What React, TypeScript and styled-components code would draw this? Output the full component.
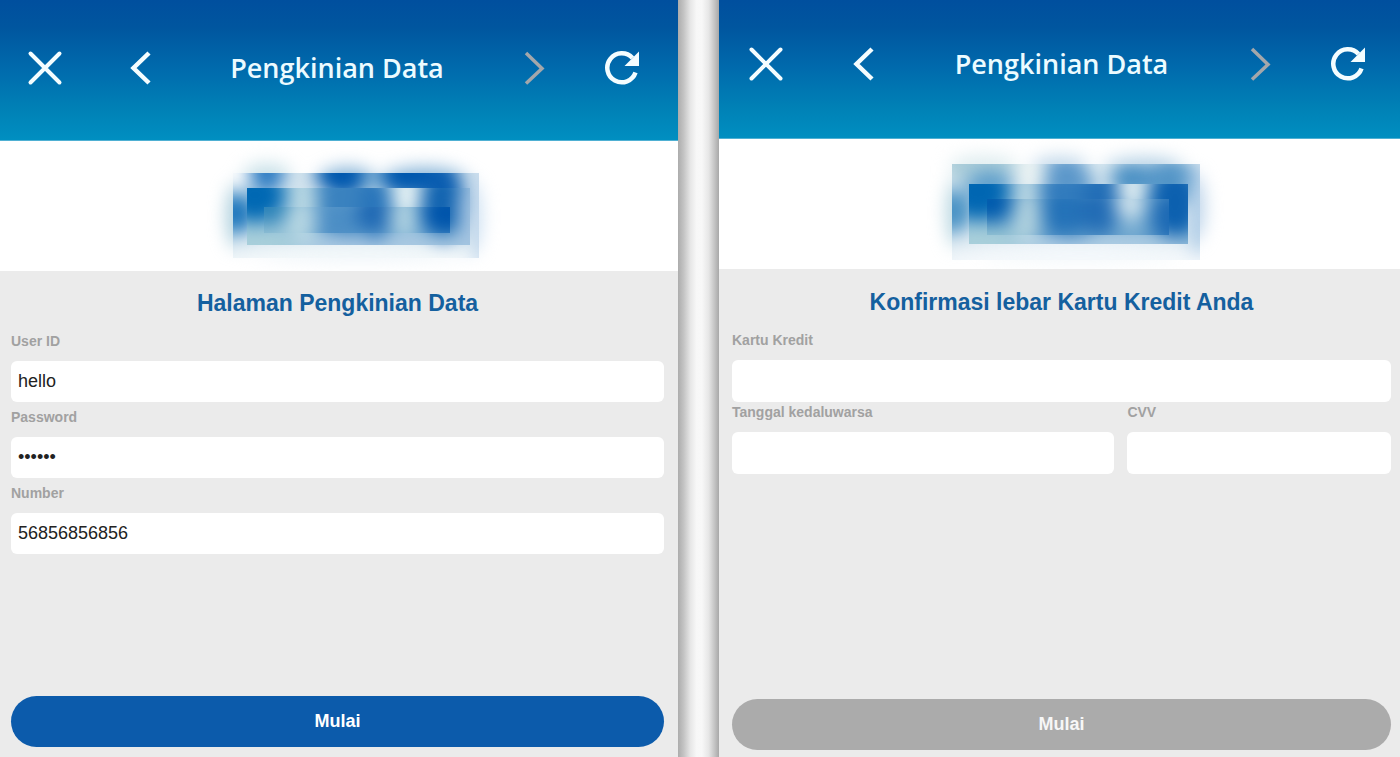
import React, { useId } from "react";
import styled, { createGlobalStyle } from "styled-components";

const GlobalStyle = createGlobalStyle`
  *, *::before, *::after { box-sizing: border-box; }
  body { margin: 0; background: #ebebeb; font-family: "Liberation Sans", Arial, sans-serif; }
`;

const Page = styled.div`
  display: grid;
  grid-template-columns: minmax(0, 678fr) 41px minmax(0, 681fr);
  min-height: 100vh;
`;

const Gutter = styled.div`
  background: linear-gradient(
    90deg,
    #acacac 0%,
    #c4c4c4 14%,
    #e6e6e6 30%,
    #f7f7f7 45%,
    #f8f8f8 58%,
    #e6e6e6 75%,
    #c4c4c4 89%,
    #a8a8a8 100%
  );
`;

const Panel = styled.section`
  display: flex;
  flex-direction: column;
  background: #ebebeb;
`;

const Header = styled.header<{ $compact?: boolean }>`
  display: flex;
  align-items: center;
  height: ${(p) => (p.$compact ? 139 : 141)}px;
  padding: ${(p) => (p.$compact ? "0 34px 10px 29px" : "0 38px 4px 27px")};
  border-bottom: 1px solid #4fb0d3;
  background: linear-gradient(180deg, #004f9e 0%, #00569f 20%, #006bad 50%, #0081b6 78%, #008fc1 100%);
`;

const NavGroup = styled.div<{ $gap: number }>`
  display: flex;
  gap: ${(p) => p.$gap}px;
`;

const IconButton = styled.button`
  width: 36px;
  height: 36px;
  padding: 0;
  border: 0;
  background: none;
  color: #f4fdff;

  &:disabled { color: #a3a7ab; }

  svg { display: block; }
`;

const NavTitle = styled.div`
  flex: 1;
  color: #ecfbff;
  font: 600 27px/36px "Open Sans", sans-serif;
  text-align: center;
  white-space: nowrap;
`;

const Brand = styled.div`
  display: flex;
  justify-content: center;
  height: 130px;
  background: #fff;

  svg { display: block; }
`;

const Form = styled.form<{ $compact?: boolean }>`
  flex: 1;
  display: flex;
  flex-direction: column;
  padding: ${(p) => (p.$compact ? "19px 9px 7px 13px" : "18px 14px 10px 11px")};
`;

const Title = styled.h1<{ $compact?: boolean }>`
  margin: 0 0 ${(p) => (p.$compact ? 14 : 9)}px;
  color: #14609f;
  font-size: 23px;
  line-height: 28px;
  text-align: center;
`;

const FieldBox = styled.div<{ $compact?: boolean }>`
  label {
    display: block;
    margin-bottom: ${(p) => (p.$compact ? 10 : 5)}px;
    color: #a1a1a1;
    font-size: 14px;
    font-weight: 700;
    line-height: ${(p) => (p.$compact ? 20 : 30)}px;
  }

  input {
    display: block;
    width: 100%;
    height: ${(p) => (p.$compact ? 42 : 41)}px;
    padding: 0 7px;
    border: 0;
    border-radius: 6px;
    background: #fff;
    color: #222;
    font: 18px "Liberation Sans", Arial, sans-serif;
  }
`;

const SplitRow = styled.div`
  display: grid;
  grid-template-columns: 383fr 264fr;
  gap: 13px;
`;

const Submit = styled.button`
  height: 51px;
  margin-top: auto;
  border: 0;
  border-radius: 26px;
  background: #0c5bab;
  color: #fff;
  font: 700 18px "Liberation Sans", Arial, sans-serif;

  &:disabled { background: #ababab; color: #f7f7f7; }
`;

type FieldProps = { id: string; label: string; type?: string; value?: string; compact?: boolean };

function Field({ id, label, type = "text", value, compact }: FieldProps) {
  return (
    <FieldBox $compact={compact}>
      <label htmlFor={id}>{label}</label>
      <input id={id} type={type} defaultValue={value} autoComplete="off" />
    </FieldBox>
  );
}

const strokeProps = { fill: "none", stroke: "currentColor", strokeWidth: 4 };

const CloseIcon = () => (
  <svg width="36" height="36" {...strokeProps} strokeLinecap="round">
    <path d="M3.5 3.5 32.5 32.5M32.5 3.5 3.5 32.5" />
  </svg>
);

const BackIcon = () => (
  <svg width="36" height="36" {...strokeProps} strokeWidth="4.500">
    <path d="M27 3 11.5 18 27 33" />
  </svg>
);

const ForwardIcon = () => (
  <svg width="36" height="36" {...strokeProps} strokeWidth="3.500">
    <path d="M10 3 26 18.500 10 33.500" />
  </svg>
);

const ReloadIcon = () => (
  <svg width="36" height="36" {...strokeProps} strokeWidth="4.500">
    <path d="M31.500 22.500A14.500 14.500 0 1 1 28.500 8" />
    <path d="M35 1.500V16H20.500Z" fill="currentColor" stroke="none" />
  </svg>
);

function NavBar({ compact }: { compact?: boolean }) {
  return (
    <Header $compact={compact}>
      <NavGroup $gap={compact ? 61 : 59}>
        <IconButton type="button" aria-label="Tutup"><CloseIcon /></IconButton>
        <IconButton type="button" aria-label="Kembali"><BackIcon /></IconButton>
      </NavGroup>
      <NavTitle>Pengkinian Data</NavTitle>
      <NavGroup $gap={52}>
        <IconButton type="button" aria-label="Maju" disabled><ForwardIcon /></IconButton>
        <IconButton type="button" aria-label="Muat ulang"><ReloadIcon /></IconButton>
      </NavGroup>
    </Header>
  );
}

/* [cx, cy, rx, ry, colour] */
type Blob = [number, number, number, number, string];
type Layer = { x: number; y: number; w: number; h: number; fill: string; blobs: Blob[] };

function ObscuredMark({ offset = 0, base, layers }: { offset?: number; base: Blob[]; layers: Layer[] }) {
  const id = useId().replace(/[^a-zA-Z0-9]/g, "");
  const draw = (blobs: Blob[]) =>
    blobs.map(([cx, cy, rx, ry, fill], i) => <ellipse key={i} cx={cx} cy={cy} rx={rx} ry={ry} fill={fill} />);
  return (
    <svg width="340" height="130" viewBox={`${offset} 0 340 130`} aria-hidden="true">
      <defs>
        <filter id={`${id}blur`} x="-30%" y="-50%" width="160%" height="200%" colorInterpolationFilters="sRGB">
          <feGaussianBlur stdDeviation="9" />
        </filter>
        {layers.map((l, i) => (
          <clipPath key={i} id={`${id}clip${i}`}>
            <rect x={l.x} y={l.y} width={l.w} height={l.h} />
          </clipPath>
        ))}
      </defs>
      <g filter={`url(#${id}blur)`}>{draw(base)}</g>
      {layers.map((l, i) => (
        <g key={i} clipPath={`url(#${id}clip${i})`}>
          <rect x={l.x} y={l.y} width={l.w} height={l.h} fill={l.fill} />
          <g filter={`url(#${id}blur)`}>{draw(l.blobs)}</g>
        </g>
      ))}
    </svg>
  );
}

const leftBase: Blob[] = [
  [98, 36, 24, 13, "#c6dfe7"],
  [68, 75, 10, 32, "#a6cbda"],
  [178, 40, 28, 13, "#7fafd5"],
  [255, 40, 42, 13, "#7fafd5"],
  [302, 76, 10, 36, "#c6dcf0"],
  [190, 112, 110, 6, "#e8f1f7"],
];

const leftLayers: Layer[] = [
  {
    x: 64, y: 32, w: 246, h: 85, fill: "#d3e4ee",
    blobs: [
      [188, 122, 150, 22, "#f3f8fa"],
      [66, 30, 14, 18, "#ffffff"],
      [98, 28, 17, 26, "#2d7cc3"],
      [66, 72, 22, 20, "#1f78bd"],
      [175, 32, 28, 24, "#0058ae"],
      [240, 32, 34, 24, "#0058ae"],
      [204, 32, 11, 20, "#7db0d6"],
      [274, 58, 20, 42, "#0a5db0"],
      [314, 75, 12, 55, "#c5d9ed"],
    ],
  },
  {
    x: 78, y: 47, w: 223, h: 57, fill: "#8ebdd9",
    blobs: [
      [210, 106, 105, 14, "#abc9e2"],
      [86, 54, 30, 27, "#0068b3"],
      [86, 104, 40, 18, "#a8cfda"],
      [180, 60, 42, 34, "#3a82bf"],
      [135, 66, 14, 42, "#b9d8e3"],
      [207, 67, 16, 32, "#2874ba"],
      [274, 62, 23, 32, "#1163b0"],
      [238, 54, 15, 24, "#e6f2f4"],
      [302, 75, 13, 44, "#a5c4e1"],
    ],
  },
  {
    x: 95, y: 66, w: 186, h: 26, fill: "#70a8d1",
    blobs: [
      [98, 64, 24, 18, "#2a82b8"],
      [100, 97, 30, 12, "#9ac6d6"],
      [168, 80, 32, 24, "#4c8ec5"],
      [132, 80, 16, 26, "#b6d6e2"],
      [207, 72, 20, 22, "#1f69b4"],
      [277, 72, 26, 24, "#0055ab"],
      [235, 76, 15, 24, "#add0e0"],
    ],
  },
];

const rightBase: Blob[] = [
  [84, 28, 34, 11, "#dcebee"],
  [57, 74, 10, 34, "#b2d3de"],
  [160, 29, 28, 11, "#bdd5e8"],
  [244, 30, 40, 11, "#b0cee3"],
  [293, 68, 11, 34, "#b7d0e8"],
  [180, 114, 100, 6, "#ecf4f8"],
];

const rightLayers: Layer[] = [
  {
    x: 52, y: 25, w: 248, h: 96, fill: "#dce9f1",
    blobs: [
      [180, 126, 150, 24, "#f4f8fb"],
      [78, 22, 38, 22, "#a9ccd8"],
      [90, 46, 24, 14, "#5c9dcb"],
      [52, 72, 22, 22, "#4a93c5"],
      [166, 40, 30, 24, "#5b97ca"],
      [131, 34, 15, 24, "#ebf3f3"],
      [232, 40, 22, 18, "#4a90c4"],
      [270, 42, 26, 24, "#5395c7"],
      [198, 26, 13, 15, "#dbeaf1"],
      [300, 70, 14, 46, "#b3cfe8"],
    ],
  },
  {
    x: 69, y: 45, w: 219, h: 60, fill: "#82b3d6",
    blobs: [
      [195, 108, 100, 15, "#afcde3"],
      [78, 53, 32, 28, "#0066b2"],
      [78, 105, 40, 20, "#a8cfda"],
      [170, 64, 38, 34, "#317bbd"],
      [127, 68, 14, 42, "#b9d7e3"],
      [203, 56, 20, 28, "#216db6"],
      [275, 63, 26, 36, "#0c60af"],
      [232, 50, 15, 22, "#dcebf0"],
    ],
  },
  {
    x: 87, y: 60, w: 182, h: 36, fill: "#619dcb",
    blobs: [
      [90, 63, 24, 20, "#005bad"],
      [90, 102, 34, 15, "#98c6d4"],
      [165, 72, 28, 25, "#2472b8"],
      [200, 72, 20, 24, "#226cb5"],
      [127, 78, 15, 30, "#b0d1de"],
      [230, 64, 15, 19, "#d0e3ec"],
      [230, 94, 18, 14, "#74aad0"],
      [271, 78, 20, 26, "#1c69b4"],
    ],
  },
];

const stop = (e: React.FormEvent) => e.preventDefault();

export default function App() {
  return (
    <>
      <GlobalStyle />
      <Page>
        <Panel>
          <NavBar />
          <Brand><ObscuredMark base={leftBase} layers={leftLayers} /></Brand>
          <Form onSubmit={stop}>
            <Title>Halaman Pengkinian Data</Title>
            <Field id="user" label="User ID" value="hello" />
            <Field id="pass" label="Password" type="password" value="••••••" />
            <Field id="number" label="Number" value="56856856856" />
            <Submit type="submit">Mulai</Submit>
          </Form>
        </Panel>
        <Gutter />
        <Panel>
          <NavBar compact />
          <Brand><ObscuredMark offset={-10} base={rightBase} layers={rightLayers} /></Brand>
          <Form $compact onSubmit={stop}>
            <Title $compact>Konfirmasi lebar Kartu Kredit Anda</Title>
            <Field id="card" label="Kartu Kredit" compact />
            <SplitRow>
              <Field id="expiry" label="Tanggal kedaluwarsa" compact />
              <Field id="cvv" label="CVV" compact />
            </SplitRow>
            <Submit type="submit" disabled>Mulai</Submit>
          </Form>
        </Panel>
      </Page>
    </>
  );
}
